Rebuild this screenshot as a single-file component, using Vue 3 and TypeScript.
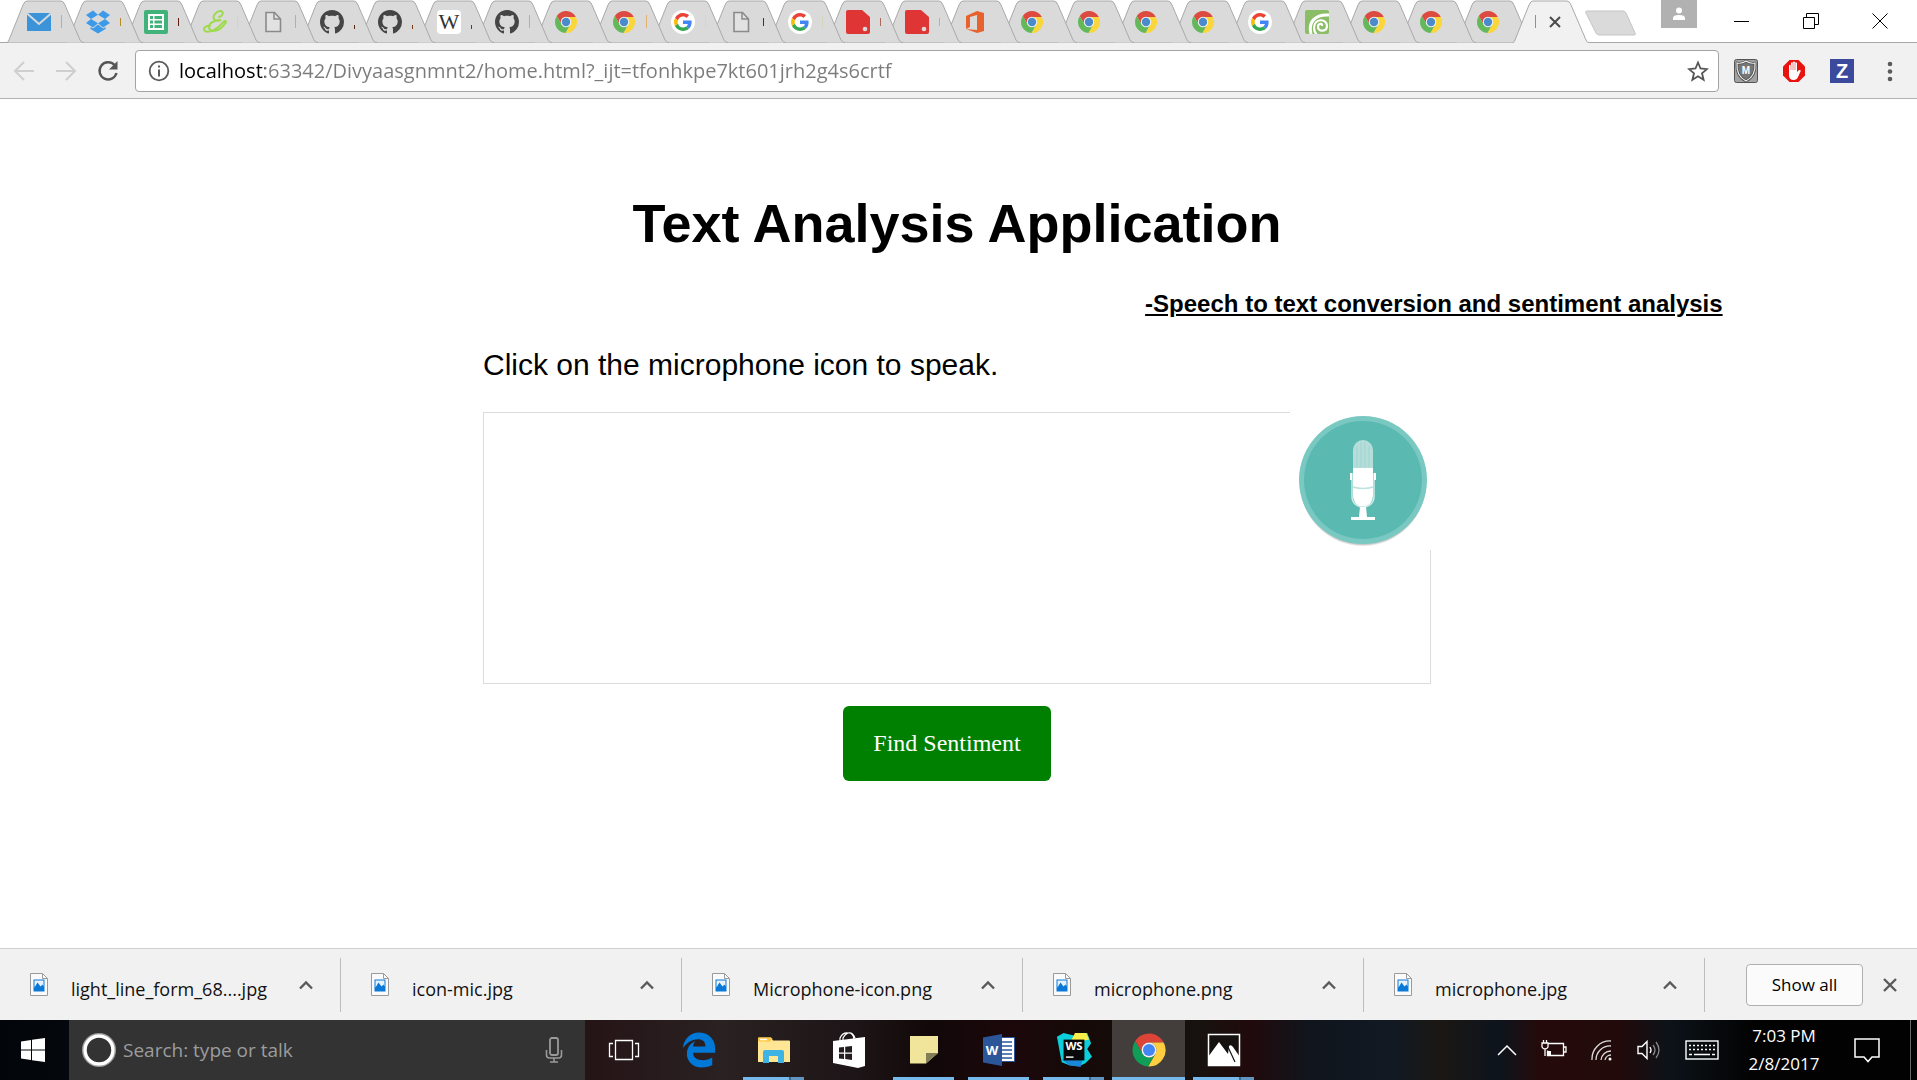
<script setup lang="ts">
import { ref } from 'vue'

interface Tab {
  icon: string
  mark?: string
  tone?: string
}

interface TaskApp {
  id: string
  label: string
  running: boolean
  stacked?: boolean
  active?: boolean
}

const wideTabs: Tab[] = [
  { icon: 'mail', mark: 'tall', tone: '#d9a66f' },
  { icon: 'dropbox', mark: 'mid', tone: '#b98a2c' },
  { icon: 'sheets', mark: 'mid', tone: '#5a1f10' },
  { icon: 'script', mark: 'tall', tone: '#d3dca0' },
  { icon: 'doc', mark: 'tall', tone: '#d9a66f' },
  { icon: 'github', mark: 'dot', tone: '#5a2a10' },
  { icon: 'github', mark: 'dot', tone: '#7a3a10' },
  { icon: 'wiki', mark: 'dot', tone: '#6a3a10' },
  { icon: 'github', mark: 'tall', tone: '#d9a66f' },
  { icon: 'chrome-old' },
  { icon: 'chrome-old', mark: 'tall', tone: '#e2b070' },
  { icon: 'google', mark: 'tall', tone: '#d9dca8' },
  { icon: 'doc', mark: 'mid', tone: '#5a2a10' },
  { icon: 'google', mark: 'tall', tone: '#d3d6b8' },
  { icon: 'red', mark: 'mid', tone: '#a86a5a' },
  { icon: 'red', mark: 'mid', tone: '#d0b070' },
]

const narrowTabs: Tab[] = [
  { icon: 'office' },
  { icon: 'chrome-old' },
  { icon: 'chrome-old' },
  { icon: 'chrome-old' },
  { icon: 'chrome-old' },
  { icon: 'google' },
  { icon: 'spiral' },
  { icon: 'chrome-old' },
  { icon: 'chrome-old' },
  { icon: 'chrome-old' },
]

const downloads: string[] = [
  'light_line_form_68....jpg',
  'icon-mic.jpg',
  'Microphone-icon.png',
  'microphone.png',
  'microphone.jpg',
]

const apps: TaskApp[] = [
  { id: 'taskview', label: 'Task View', running: false },
  { id: 'edge', label: 'Edge', running: false },
  { id: 'explorer', label: 'File Explorer', running: true, stacked: true },
  { id: 'store', label: 'Store', running: false },
  { id: 'sticky', label: 'Sticky Notes', running: true },
  { id: 'word', label: 'Word', running: true },
  { id: 'webstorm', label: 'WebStorm', running: true, stacked: true },
  { id: 'chrome', label: 'Chrome', running: true, active: true },
  { id: 'photos', label: 'Photos', running: true, stacked: true },
]

const address = ref('localhost:63342/Divyaasgnmnt2/home.html?_ijt=tfonhkpe7kt601jrh2g4s6crtf')
const speech = ref('')
const query = ref('')
</script>

<template>
  <div class="screen">
    <svg class="defs" aria-hidden="true">
      <symbol id="mail" viewBox="0 0 24 24">
        <path d="M0 3h24v18H0z" fill="#3b93d9" />
        <path d="M0 3.5 12 14 24 3.5" fill="none" stroke="#dadada" stroke-width="2" />
      </symbol>
      <symbol id="dropbox" viewBox="0 0 24 24">
        <path d="M7 0.5 12 4.7 5 9 0 5zM17 .5 24 5 19 9 12 4.700zM0 13l5-4 7 4.300-5 4.200zM24 13l-5-4-7 4.300 5 4.200zM12 14.500l5 4 2.500-1.600v2L12 23.500l-7.500-4.600v-2L7 18.500z" fill="#3d9ae8" />
      </symbol>
      <symbol id="sheets" viewBox="0 0 24 24">
        <rect width="24" height="24" rx="2" fill="#42b27b" />
        <path d="M4 4h16v16H4z" fill="#fff" />
        <path d="M6 6h3v3H6zM10.500 6H18v3h-7.500zM6 10.500h3v3H6zM10.500 10.500H18v3h-7.500zM6 15h3v3H6zM10.500 15H18v3h-7.500z" fill="#42b27b" />
      </symbol>
      <symbol id="script" viewBox="0 0 24 24">
        <path d="M16 7c4-1 5-5 2-6-4-.5-9 5-7 8 1 2 4 2 7 1-6 0-13 3-12 8 1 4 8 4 13-1 4-4 5-6 3-6-2 .5-4 4-8 7-5 4-11 5-13 2-1-2 3-5 6-4" fill="none" stroke="#9edb4c" stroke-width="2" stroke-linecap="round" />
      </symbol>
      <symbol id="doc" viewBox="0 0 24 24">
        <path d="M5 2.500h8.500L19.500 9v12.500H5z" fill="#e2e2e2" stroke="#8a8a8a" stroke-width="1.600" />
        <path d="M13 2.500V9h6" fill="none" stroke="#8a8a8a" stroke-width="1.500" />
      </symbol>
      <symbol id="github" viewBox="0 0 16 16">
        <path d="M8 0C3.58 0 0 3.58 0 8c0 3.54 2.29 6.53 5.47 7.59.4.07.55-.17.55-.38 0-.19-.01-.82-.01-1.49-2.01.37-2.53-.49-2.69-.94-.09-.23-.48-.94-.82-1.13-.28-.15-.68-.52-.01-.53.63-.01 1.08.58 1.23.82.72 1.21 1.87.87 2.33.66.07-.52.28-.87.51-1.07-1.78-.2-3.64-.89-3.64-3.95 0-.87.31-1.59.82-2.15-.08-.2-.36-1.02.08-2.12 0 0 .67-.21 2.2.82.64-.18 1.32-.27 2-.27.68 0 1.36.09 2 .27 1.53-1.04 2.2-.82 2.2-.82.44 1.1.16 1.92.08 2.12.51.56.82 1.27.82 2.15 0 3.07-1.87 3.75-3.65 3.95.29.25.54.73.54 1.48 0 1.07-.01 1.93-.01 2.2 0 .21.15.46.55.38A8.013 8.013 0 0016 8c0-4.42-3.58-8-8-8z" fill="#454545" />
      </symbol>
      <symbol id="wiki" viewBox="0 0 24 24">
        <rect width="24" height="24" rx="4" fill="#fff" />
        <text x="12" y="19" text-anchor="middle" font-family="Liberation Serif, serif" font-size="22" fill="#333">W</text>
      </symbol>
      <symbol id="chrome-old" viewBox="0 0 24 24">
        <path d="M2.800 6A11 11 0 0 1 21.800 7H12A5 5 0 0 0 7.700 14.500z" fill="#dc4a40" />
        <path d="M12 7H21.800A11 11 0 0 1 11.400 23L16.300 14.500A5 5 0 0 0 12 7z" fill="#fbd63a" />
        <path d="M7.700 14.500 2.800 6A11 11 0 0 0 11.400 23L16.300 14.500A5 5 0 0 1 7.700 14.500z" fill="#63b85a" />
        <circle cx="12" cy="12" r="5.200" fill="#f1f1f1" />
        <circle cx="12" cy="12" r="4.200" fill="#4a8ccb" />
      </symbol>
      <symbol id="chrome" viewBox="0 0 24 24">
        <path d="M2.800 6A11 11 0 0 1 21.800 7H12A5 5 0 0 0 7.700 14.500z" fill="#db4437" />
        <path d="M12 7H21.800A11 11 0 0 1 11.400 23L16.300 14.500A5 5 0 0 0 12 7z" fill="#ffcd40" />
        <path d="M7.700 14.500 2.800 6A11 11 0 0 0 11.400 23L16.300 14.500A5 5 0 0 1 7.700 14.500z" fill="#0f9d58" />
        <circle cx="12" cy="12" r="5" fill="#f1f1f1" />
        <circle cx="12" cy="12" r="4" fill="#4285f4" />
      </symbol>
      <symbol id="google" viewBox="-8 -8 64 64">
        <circle cx="24" cy="24" r="32" fill="#fff" />
        <path d="M24 9.5c3.54 0 6.71 1.22 9.21 3.6l6.85-6.85C35.9 2.38 30.47 0 24 0 14.62 0 6.51 5.38 2.56 13.22l7.98 6.19C12.43 13.72 17.74 9.5 24 9.5z" fill="#ea4335" />
        <path d="M46.98 24.55c0-1.57-.15-3.09-.38-4.55H24v9.02h12.94c-.58 2.96-2.26 5.48-4.78 7.18l7.73 6c4.51-4.18 7.09-10.36 7.09-17.65z" fill="#4285f4" />
        <path d="M10.53 28.59c-.48-1.45-.76-2.99-.76-4.59s.27-3.14.76-4.59l-7.98-6.19C.92 16.46 0 20.12 0 24c0 3.88.92 7.54 2.56 10.78l7.97-6.19z" fill="#fbbc05" />
        <path d="M24 48c6.48 0 11.93-2.13 15.89-5.81l-7.73-6c-2.15 1.45-4.92 2.3-8.16 2.3-6.26 0-11.57-4.22-13.47-9.91l-7.98 6.19C6.51 42.62 14.62 48 24 48z" fill="#34a853" />
      </symbol>
      <symbol id="red" viewBox="0 0 24 24">
        <path d="M2 0h14l8 7v15q0 2-2 2H2q-2 0-2-2V2q0-2 2-2z" fill="#e03535" />
        <circle cx="19" cy="19" r="2.300" fill="#dadada" />
      </symbol>
      <symbol id="office" viewBox="0 0 24 24">
        <path d="M3 6 14 1l7 2v18l-7 2-11-4 11 1V5L7 7v10l-4 2z" fill="#e8622d" />
      </symbol>
      <symbol id="spiral" viewBox="0 0 24 24">
        <rect width="24" height="24" rx="2" fill="#8bbd67" />
        <path d="M6 24C3 12 10 4 24 5" fill="none" stroke="#fff" stroke-width="3" />
        <path d="M17 16c1-3-4-3-4 1 0 5 9 5 9-1 0-8-13-8-13 2 0 3 1 5 3 7" fill="none" stroke="#fff" stroke-width="2.200" />
      </symbol>

      <symbol id="taskview" viewBox="0 0 36 36">
        <path d="M9.500 8.500h17v19h-17zM7 11.500H3.500v13H7M29 11.500h3.500v13H29" fill="none" stroke="#fff" stroke-width="1.300" />
      </symbol>
      <symbol id="edge" viewBox="0 0 512 512">
        <path d="M486.286 243.671c0-44.032-7.754-84.465-28.801-122.405C416.498 47.879 343.912 8.001 258.893 8.001 118.962 7.724 40.617 113.214 26.056 227.679c42.429-61.312 117.073-121.376 220.375-124.966 0 0 109.666 0 99.419 104.957H169.997c6.369-37.386 18.554-58.986 34.339-78.926-75.048 34.9-121.85 96.096-120.742 188.315.83 71.448 50.124 144.836 120.743 171.976 83.357 31.843 192.776 7.2 240.132-21.323V363.307c-80.864 56.494-270.871 60.925-272.255-67.572h314.073v-52.064z" fill="#0078d7" />
      </symbol>
      <symbol id="explorer" viewBox="0 0 36 36">
        <path d="M2 6.500q0-1 1-1h12l2 3h16q1 0 1 1V30H2z" fill="#ffe694" />
        <path d="M2 6.500q0-1 1-1h11.500l2 1-2.500 3H2z" fill="#ffc83d" />
        <path d="M4 7.500h7" stroke="#fff" stroke-width="1.500" />
        <path d="M7 31V20q0-2 2-2h17q2 0 2 2v11h-6v-7h-9v7z" fill="#3eb4e4" />
      </symbol>
      <symbol id="store" viewBox="0 0 36 36">
        <path d="M2 9 34 5v29l-7 2L2 31z" fill="#fff" />
        <path d="M9 9V6q3-6 8-5 5-1 7 5M12 8V6q2-4 5-5M18 1q4 0 5 6" fill="none" stroke="#fff" stroke-width="1.200" />
        <path d="m8 15.500 5-.5v5.500H8zM14.200 14.800l6.800-.8v6.500h-6.800zM8 21.700h5v5.300l-5-.5zM14.200 21.700H21V28l-6.800-.9z" fill="#241c1c" />
      </symbol>
      <symbol id="sticky" viewBox="0 0 36 36">
        <path d="M4 4h28v17L20 31.500H4z" fill="#f0e59a" />
        <path d="M20 31.500V21h12z" fill="#837d58" />
      </symbol>
      <symbol id="word" viewBox="0 0 36 36">
        <path d="M19 5.500h14.500v24H19z" fill="#fff" stroke="#2b579a" />
        <path d="M21 10h10M21 14h10M21 18h10M21 22h10M21 26h10" stroke="#2b579a" stroke-width="1.500" />
        <path d="M2 5.500 21 2v32L2 30.500z" fill="#2b579a" />
        <text x="11" y="23" text-anchor="middle" font-family="Open Sans, sans-serif" font-weight="700" font-size="13" fill="#fff">W</text>
      </symbol>
      <symbol id="webstorm" viewBox="0 0 38 38">
        <path d="M1 5 8 1l12 3 7-3h6l4 11-4 6 5 8-7 7-6 3-11-1-8-3z" fill="#0bd0dc" />
        <path d="M20 1h12l3 7-10 2-9-1z" fill="#f8ee4a" />
        <path d="M6 29h22l-2 8-12-2z" fill="#1988d8" />
        <path d="M8 8h22v22H8z" fill="#080808" />
        <path d="M10.500 26.500h8" stroke="#fff" stroke-width="1.500" />
        <text x="19" y="19" text-anchor="middle" font-family="Open Sans, sans-serif" font-weight="700" font-size="12" fill="#fff">WS</text>
      </symbol>
      <symbol id="photos" viewBox="0 0 36 36">
        <path d="M2.500 2.500h31v31h-31z" fill="#15110f" stroke="#fff" stroke-width="1.500" />
        <path d="M2 25 13 10l9 12 1-8q2-2 4 1l7 10v9H2z" fill="#fff" />
        <path d="m22 15 7 15" stroke="#15110f" stroke-width="1.200" />
      </symbol>
      <symbol id="picture" viewBox="0 0 18 23">
        <path d="M.500.500h12l5 5v17H.500z" fill="#fbfbfb" stroke="#9a9a9a" />
        <path d="M12.500.500v5h5" fill="none" stroke="#9a9a9a" />
        <path d="M3.500 6.500h11v12h-11z" fill="#0a78d6" />
        <path d="M4.500 7.500h9v6l-1-2-2 2-3-4-3 5z" fill="#fff" opacity=".9" />
      </symbol>
      <symbol id="chevron" viewBox="0 0 16 12">
        <path d="m2 9.500 6-6 6 6" fill="none" stroke="#5a5a5a" stroke-width="2.400" />
      </symbol>
    </svg>

    <header class="browser">
      <nav class="strip" aria-label="Tabs">
        <div class="tabs wide">
          <div v-for="(tab, i) in wideTabs" :key="i" class="tab" :style="{ zIndex: 40 - i }">
            <svg class="shape" viewBox="0 0 78 43"><path d="M0 42.500C2 42.500 2 42 3 40L17 5Q18.500 1 21 1H55Q57.500 1 59 5L74 40Q75 42.500 78 42.500" fill="#dadada" stroke="#a9a9a9" /></svg>
            <svg class="favicon"><use :href="'#' + tab.icon" /></svg>
            <i v-if="tab.mark" class="mark" :class="tab.mark" :style="{ background: tab.tone }"></i>
          </div>
        </div>
        <div class="tabs narrow">
          <div v-for="(tab, i) in narrowTabs" :key="i" class="tab" :style="{ zIndex: 20 - i }">
            <svg class="shape" viewBox="0 0 78 43"><path d="M0 42.500C2 42.500 2 42 3 40L17 5Q18.500 1 21 1H55Q57.500 1 59 5L74 40Q75 42.500 78 42.500" fill="#dadada" stroke="#a9a9a9" /></svg>
            <svg class="favicon"><use :href="'#' + tab.icon" /></svg>
          </div>
        </div>
        <div class="tab current">
          <svg class="shape" viewBox="0 0 78 43"><path d="M0 43C2 42.500 2 42 3 40L17 5Q18.500 1 21 1H55Q57.500 1 59 5L74 40Q75 42.500 78 43" fill="#f1f1f1" stroke="#a9a9a9" /></svg>
          <i class="mark tall"></i>
          <button class="bare" aria-label="Close tab">
            <svg width="12" height="12" viewBox="0 0 12 12"><path d="m1 1 10 10M11 1 1 11" stroke="#4a4a4a" stroke-width="2" /></svg>
          </button>
        </div>
        <button class="bare newtab" aria-label="New tab">
          <svg width="52" height="26" viewBox="0 0 52 26"><path d="M2 1h36q2 0 3 2l9 20q1 2-1 2H14q-2 0-3-2L1 3q-1-2 1-2z" fill="#dadada" stroke="#c4c4c4" /></svg>
        </button>
        <div class="window">
          <button class="bare profile" aria-label="Profile">
            <svg width="14" height="14" viewBox="0 0 14 14"><circle cx="7" cy="3.500" r="3" fill="#fff" /><path d="M1 13v-2q0-3 6-3t6 3v2z" fill="#fff" /></svg>
          </button>
          <button class="bare" aria-label="Minimise">
            <svg width="16" height="16" viewBox="0 0 16 16"><path d="M0 8.500h15" stroke="#000" /></svg>
          </button>
          <button class="bare" aria-label="Restore">
            <svg width="16" height="16" viewBox="0 0 16 16"><path d="M.500 4.500h11v11H.500zM3.500 4V.500h12v11H12" fill="none" stroke="#000" /></svg>
          </button>
          <button class="bare" aria-label="Close window">
            <svg width="16" height="16" viewBox="0 0 16 16"><path d="m.500.500 15 15M15.500.500l-15 15" stroke="#000" /></svg>
          </button>
        </div>
      </nav>

      <div class="toolbar">
        <div class="nav">
          <button class="bare" aria-label="Back"><svg width="22" height="20" viewBox="0 0 22 20"><path d="M21 10H3M11 1l-9 9 9 9" fill="none" stroke="#cfcfcf" stroke-width="2" /></svg></button>
          <button class="bare" aria-label="Forward"><svg width="22" height="20" viewBox="0 0 22 20"><path d="M1 10h18M11 1l9 9-9 9" fill="none" stroke="#cfcfcf" stroke-width="2" /></svg></button>
          <button class="bare" aria-label="Reload"><svg width="22" height="22" viewBox="0 0 22 22"><path d="M17.500 5A8.600 8.600 0 1 0 19.500 13" fill="none" stroke="#555" stroke-width="2.400" /><path d="M20.500 1v8.500H12z" fill="#555" /></svg></button>
        </div>
        <label class="omnibox">
          <svg width="22" height="22" viewBox="0 0 22 22"><circle cx="11" cy="11" r="9.300" fill="none" stroke="#5a5a5a" stroke-width="1.800" /><path d="M10 5.500h2v2h-2zM10 9.500h2v7h-2z" fill="#5a5a5a" /></svg>
          <input v-model="address" class="url" type="text" aria-label="Address" />
          <svg width="22" height="22" viewBox="0 0 22 22"><path d="m11 2.500 2.500 6 6.500.600-5 4.200 1.600 6.400L11 16.200l-5.600 3.500L7 13.300 2 9.100l6.500-.600z" fill="none" stroke="#555" stroke-width="1.800" /></svg>
        </label>
        <div class="extensions">
          <button class="bare" aria-label="Web advisor">
            <svg width="24" height="24" viewBox="0 0 24 24"><rect x=".500" y=".500" width="23" height="23" rx="2" fill="#a2a2a2" stroke="#555" /><path d="M3 4q5 1 9-2 4 3 9 2 1 13-9 18Q2 17 3 4z" fill="#777" stroke="#4a4a4a" stroke-width="2.500" /><path d="M3 4q5 1 9-2 4 3 9 2 1 13-9 18Q2 17 3 4z" fill="none" stroke="#eee" stroke-width="1.200" /><text x="12" y="15" text-anchor="middle" font-family="Liberation Sans, sans-serif" font-weight="700" font-size="10" fill="#fff">M</text></svg>
          </button>
          <button class="bare" aria-label="Ad blocker">
            <svg width="24" height="24" viewBox="0 0 24 24"><path d="M7.500 1h9L23 7.500v9L16.500 23h-9L1 16.500v-9z" fill="#e8130f" /><path d="M7 14V6.500q1-1.500 2 0V4q1-1.500 2 0v-.800q1-1.500 2 0V4q1-1.500 2 0v9l2-2q2.500-.500 1.500 1.500L16 18q-1 3-4.500 3Q7 21 7 16z" fill="#fff" /><path d="M9 6v5M11 4v7M13 4v7" stroke="#e25a55" stroke-width=".700" /></svg>
          </button>
          <button class="bare" aria-label="Z extension">
            <svg width="24" height="24" viewBox="0 0 24 24"><path d="M0 0h24v24H0z" fill="#3b4a9c" /><text x="12" y="19" text-anchor="middle" font-family="Liberation Sans, sans-serif" font-weight="700" font-size="20" fill="#fff">Z</text></svg>
          </button>
          <button class="bare" aria-label="Menu">
            <svg width="24" height="24" viewBox="0 0 24 24"><circle cx="12" cy="5" r="2.300" fill="#5a5a5a" /><circle cx="12" cy="12.500" r="2.300" fill="#5a5a5a" /><circle cx="12" cy="20" r="2.300" fill="#5a5a5a" /></svg>
          </button>
        </div>
      </div>
    </header>

    <main class="page">
      <h1>Text Analysis Application</h1>
      <h3>-Speech to text conversion and sentiment analysis</h3>
      <section class="panel">
        <label class="prompt" for="speech">Click on the microphone icon to speak.</label>
        <div class="box">
          <textarea id="speech" v-model="speech"></textarea>
          <button class="mic" aria-label="Speak">
            <svg width="136" height="136" viewBox="0 0 136 136">
              <ellipse cx="68" cy="70" rx="63" ry="63" fill="#000" opacity=".1" />
              <ellipse cx="68" cy="69" rx="63" ry="63" fill="#000" opacity=".12" />
              <circle cx="68" cy="67" r="64" fill="#79c8c1" />
              <circle cx="68" cy="67" r="59" fill="#5abab1" />
              <path d="M58 55V37a10 10 0 0 1 20 0v18z" fill="#b5deda" />
              <path d="M62 54V33M66 54V29M70 54V29M74 54V33" stroke="#9fd5d0" />
              <path d="M58 55h20v28a10 11 0 0 1-20 0z" fill="#fff" />
              <path d="M58 74q10 3 20 0" fill="none" stroke="#bfe3e0" stroke-width="1.500" />
              <path d="M57 60v24a11 10 0 0 0 22 0V60" fill="none" stroke="#cdeae7" stroke-width="1.500" />
              <path d="M55 60h2v7h-2zM79 60h2v7h-2z" fill="#fff" />
              <path d="M65 94h6l1 10h8v3H56v-3h8z" fill="#fff" />
            </svg>
          </button>
        </div>
        <button class="find">Find Sentiment</button>
      </section>
    </main>

    <section class="shelf" aria-label="Downloads">
      <div v-for="name in downloads" :key="name" class="download">
        <svg class="file"><use href="#picture" /></svg>
        <a href="#">{{ name }}</a>
        <button class="bare" :aria-label="'Options for ' + name"><svg width="16" height="12"><use href="#chevron" /></svg></button>
      </div>
      <div class="shelf-end">
        <button class="show">Show all</button>
        <button class="bare" aria-label="Close downloads"><svg width="14" height="14" viewBox="0 0 14 14"><path d="m1 1 12 12M13 1 1 13" stroke="#5a5a5a" stroke-width="2.400" /></svg></button>
      </div>
    </section>

    <footer class="taskbar">
      <button class="bare start" aria-label="Start">
        <svg width="24" height="24" viewBox="0 0 24 24"><path d="m0 3.500 10-1.500v9.500H0zM11 1.800 24 0v11.500H11zM0 12.500h10V22L0 20.500zM11 12.500h13V24l-13-1.800z" fill="#fff" /></svg>
      </button>
      <label class="search">
        <svg width="36" height="36" viewBox="0 0 36 36"><circle cx="18" cy="18" r="16.300" fill="none" stroke="#9a9a9a" stroke-width="1.500" /><circle cx="18" cy="18" r="14" fill="none" stroke="#fff" stroke-width="3.500" /></svg>
        <input v-model="query" type="text" placeholder="Search: type or talk" aria-label="Search" />
        <svg width="18" height="26" viewBox="0 0 18 26"><rect x="5" y="1" width="8" height="17" rx="2" fill="none" stroke="#9a9a9a" stroke-width="1.800" /><path d="M1.500 13v5q0 3 3 3h9q3 0 3-3v-5M9 21v4M5 25h8" fill="none" stroke="#9a9a9a" stroke-width="1.600" /></svg>
      </label>
      <div class="apps">
        <button v-for="app in apps" :key="app.id" class="bare app" :class="{ running: app.running, stacked: app.stacked, active: app.active }" :aria-label="app.label">
          <svg><use :href="'#' + app.id" /></svg>
        </button>
      </div>
      <div class="tray">
        <button class="bare" aria-label="Hidden icons"><svg width="20" height="12" viewBox="0 0 20 12"><path d="m1 11 9-9 9 9" fill="none" stroke="#fff" stroke-width="1.500" /></svg></button>
        <button class="bare" aria-label="Battery"><svg width="26" height="20" viewBox="0 0 26 20"><path d="M7.500 3.500h15v12H6.500v-5M23 7h2v5h-2M1 3h6v4q-1 2-3 2T1 7zM2.500 3V0M5.500 3V0M4 9v7" fill="none" stroke="#fff" stroke-width="1.300" /><path d="M7 11h3v4H7z" fill="#fff" /></svg></button>
        <button class="bare" aria-label="Wireless"><svg width="22" height="22" viewBox="0 0 22 22"><path d="M1 21A18 18 0 0 1 20 2M5 21A14 14 0 0 1 20 7M10 21A10 10 0 0 1 20 12M14 21A6 6 0 0 1 20 16" fill="none" stroke="#ddd" stroke-width="1.300" /><circle cx="19" cy="20" r="1.500" fill="#fff" /></svg></button>
        <button class="bare" aria-label="Volume"><svg width="24" height="20" viewBox="0 0 24 20"><path d="M1 6.500h4l5-5v17l-5-5H1z" fill="none" stroke="#fff" stroke-width="1.400" /><path d="M13 7q2 3 0 6" fill="none" stroke="#fff" stroke-width="1.300" /><path d="M16 5q4 5 0 10M19 2q6 8 0 16" fill="none" stroke="#888" stroke-width="1.300" /></svg></button>
        <button class="bare" aria-label="Keyboard"><svg width="34" height="20" viewBox="0 0 34 20"><rect x="1" y="1" width="32" height="18" fill="none" stroke="#fff" stroke-width="1.400" /><path d="M4 5.500h26M4 9.500h26" stroke="#fff" stroke-width="1.500" stroke-dasharray="2 2" /><path d="M4 14.500h3M9 14.500h16M27 14.500h3" stroke="#fff" stroke-width="1.400" /></svg></button>
        <button class="bare clock"><span>7:03 PM</span><span>2/8/2017</span></button>
        <button class="bare notices" aria-label="Notifications"><svg width="26" height="26" viewBox="0 0 26 26"><path d="M1 2h24v18h-7l-4 4.500-4-4.500H1z" fill="none" stroke="#fff" stroke-width="1.500" /></svg></button>
      </div>
    </footer>
  </div>
</template>

<style>
html,
body {
  margin: 0;
  background: #fff;
}
</style>

<style scoped>
.screen {
  display: flex;
  flex-direction: column;
  min-height: 100vh;
  font-family: 'Open Sans', sans-serif;
  color: #000;
}

.screen * {
  box-sizing: border-box;
}

.defs {
  display: none;
}

.bare {
  display: flex;
  align-items: center;
  justify-content: center;
  padding: 0;
  border: 0;
  background: none;
  font: inherit;
  color: inherit;
}

.strip {
  display: flex;
  height: 43px;
  padding-left: 16px;
  border-bottom: 1px solid #a9a9a9;
}

.tabs {
  display: flex;
}

.wide {
  flex: 936;
}

.narrow {
  flex: 570;
}

.tab {
  position: relative;
  display: flex;
  flex: 1;
  align-items: center;
  height: 43px;
  padding-left: 11px;
}

.shape {
  position: absolute;
  top: 0;
  left: -10px;
  width: 78px;
  height: 43px;
}

.favicon {
  position: relative;
  flex: none;
  width: 24px;
  height: 24px;
}

.mark {
  position: relative;
  width: 1px;
  margin-left: 10px;
  background: #8f88b8;
}

.tall {
  height: 13px;
}

.mid {
  height: 8px;
}

.dot {
  height: 4px;
  align-self: flex-end;
  margin-bottom: 14px;
}

.current {
  z-index: 50;
  flex: none;
  width: 62px;
  padding-left: 3px;
}

.current .bare {
  position: relative;
  margin-left: 13px;
}

.newtab {
  align-items: flex-start;
  width: 54px;
  padding-top: 10px;
}

.window {
  display: flex;
  flex: none;
  width: 279px;
  padding: 0 3px 0 23px;
}

.window .bare {
  flex: 1;
  height: 41px;
}

.window .profile {
  flex: none;
  width: 36px;
  height: 28px;
  margin-right: 10px;
  background: #b1b1b1;
}

.toolbar {
  display: flex;
  align-items: center;
  height: 56px;
  background: #f1f1f1;
  border-bottom: 1px solid #b3b3b3;
}

.nav {
  display: flex;
  flex: none;
  gap: 20px;
  width: 135px;
  padding-left: 13px;
}

.omnibox {
  display: flex;
  flex: 1;
  align-items: center;
  gap: 9px;
  height: 42px;
  padding: 0 9px 0 12px;
  border: 1px solid #a3a3a3;
  border-radius: 4px;
  background: #fff;
}

.url {
  flex: 1;
  min-width: 0;
  padding: 0;
  border: 0;
  outline: 0;
  font: 20px/28px 'Open Sans', sans-serif;
  color: transparent;
  background: linear-gradient(90deg, #000 86px, #7b7b7b 86px);
  background-clip: text;
  -webkit-background-clip: text;
}

.extensions {
  display: flex;
  flex: none;
  gap: 24px;
  width: 198px;
  padding-left: 15px;
}

.page {
  display: flex;
  flex: 1;
  flex-direction: column;
  align-items: center;
  padding: 93px 3px 0 0;
  font-family: 'Liberation Sans', sans-serif;
}

h1 {
  margin: 0 0 36px;
  font-size: 54px;
  line-height: 62px;
}

h3 {
  align-self: flex-end;
  margin: 0 10% 30px 0;
  font-size: 24px;
  line-height: 28px;
  text-decoration: underline;
}

.panel {
  display: flex;
  flex-direction: column;
  align-items: center;
  width: 948px;
  max-width: 100%;
}

.prompt {
  align-self: flex-start;
  margin-bottom: 30px;
  font-size: 30px;
  line-height: 34px;
}

.box {
  position: relative;
  display: flex;
  align-self: stretch;
  height: 272px;
  margin-bottom: 22px;
}

textarea {
  flex: 1;
  padding: 12px;
  border: 1px solid #dcdcdc;
  outline: 0;
  resize: none;
  font: 24px 'Liberation Sans', sans-serif;
}

.mic {
  position: absolute;
  top: 0;
  right: 0;
  display: flex;
  align-items: center;
  justify-content: flex-end;
  width: 141px;
  height: 138px;
  padding: 0;
  border: 0;
  background: #fff;
}

.find {
  margin-right: 20px;
  width: 208px;
  height: 75px;
  border: 0;
  border-radius: 6px;
  background: #008000;
  color: #fff;
  font: 24px 'Liberation Serif', serif;
}

.shelf {
  display: flex;
  align-items: center;
  height: 72px;
  background: #f1f1f1;
  border-top: 1px solid #cfcfcf;
}

.download {
  display: flex;
  flex: 0 1 341px;
  align-items: center;
  height: 54px;
  padding: 0 26px 0 30px;
  border-right: 1px solid #bdbdbd;
}

.file {
  width: 18px;
  height: 23px;
}

.download a {
  flex: 1;
  margin: 8px 0 0 23px;
  color: #111;
  font-size: 18px;
  line-height: 28px;
  text-decoration: none;
  white-space: nowrap;
}

.shelf-end {
  display: flex;
  flex: 1;
  align-items: center;
  justify-content: flex-end;
  gap: 20px;
  padding-right: 20px;
}

.show {
  width: 117px;
  height: 42px;
  border: 1px solid #b0b0b0;
  border-radius: 4px;
  background: #fbfbfb;
  color: #000;
  font: 500 17px 'Open Sans', sans-serif;
}

.taskbar {
  display: flex;
  height: 60px;
  color: #fff;
  background: linear-gradient(90deg, #02060a 0, #04080c 69px, #251416 585px, #2a2122 720px, #1c1416 860px, #120809 930px, #1c080b 1010px, #150a08 1090px, #17120f 1200px, #210a0c 1250px, #10151d 1310px, #111923 1390px, #1b1714 1440px, #0d141c 1500px, #250a0b 1540px, #220a0b 1620px, #0c1319 1670px, #030303 1750px, #020202 100%);
}

.start {
  width: 69px;
  padding-right: 3px;
}

.search {
  display: flex;
  align-items: center;
  gap: 6px;
  width: 516px;
  padding: 0 22px 0 12px;
  background: #333;
}

.search input {
  flex: 1;
  min-width: 0;
  padding: 0;
  border: 0;
  outline: 0;
  background: none;
  color: #fff;
  font: 19px/28px 'Open Sans', sans-serif;
}

.search input::placeholder {
  color: #9c9c9c;
  opacity: 1;
}

.apps {
  display: flex;
  gap: 14px;
  padding-left: 8px;
}

.app {
  position: relative;
  width: 61px;
}

.app svg {
  width: 36px;
  height: 36px;
}

.running::after {
  content: '';
  position: absolute;
  right: 0;
  bottom: 0;
  left: 0;
  height: 3px;
  background: #76b9ed;
}

.stacked::after {
  background: linear-gradient(90deg, #76b9ed 46px, #3f6a8a 46px, #3f6a8a 48px, #5f95c0 48px);
}

.active {
  width: 73px;
  margin: 0 -6px;
  background: #433e3b;
}

.tray {
  display: flex;
  align-items: center;
  gap: 24px;
  margin: 0 6px 0 auto;
  padding-right: 25px;
  border-right: 1px solid #666;
}

.clock {
  flex-direction: column;
  width: 82px;
  font-size: 17px;
  line-height: 28px;
}

.notices {
  width: 36px;
}
</style>
